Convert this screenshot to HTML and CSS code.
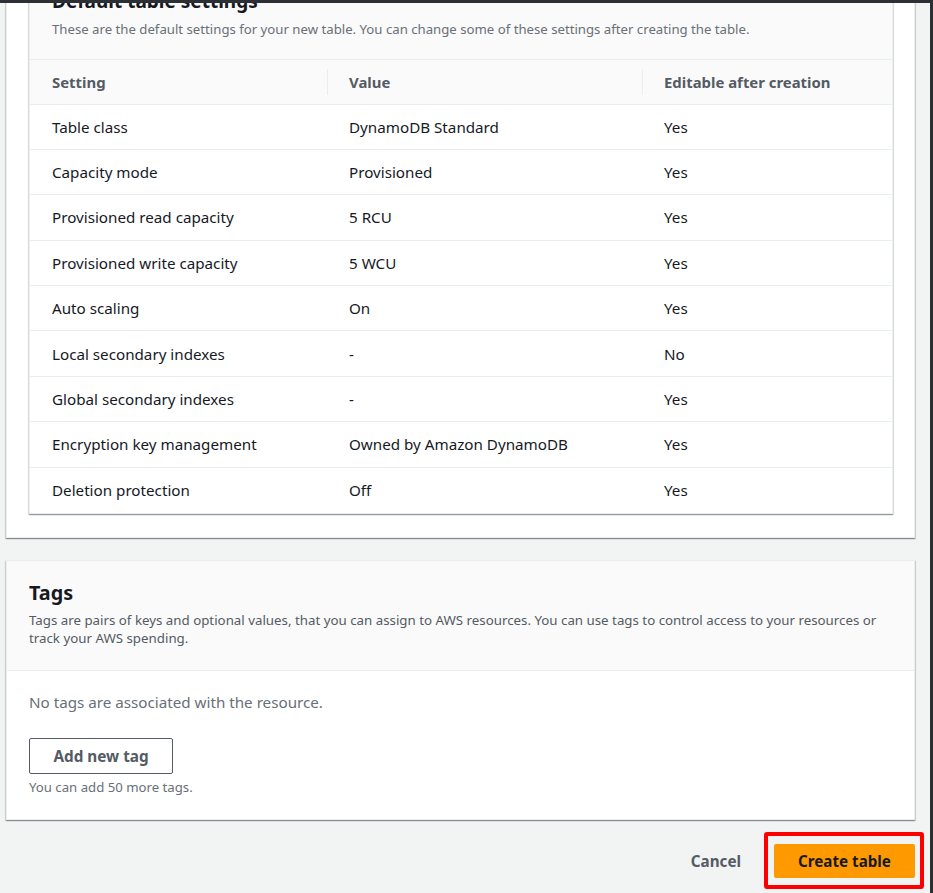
FILE: index.html
```html
<!DOCTYPE html>
<html lang="en">
<head>
<meta charset="utf-8">
<title>Create table</title>
<link rel="stylesheet" href="styles.css">
</head>
<body>
<main class="page">
  <section class="card card-settings">
    <div class="table-box">
      <div class="table-header">
        <h2 class="title">Default table settings</h2>
        <p class="desc">These are the default settings for your new table. You can change some of these settings after creating the table.</p>
      </div>
      <table class="settings">
        <colgroup>
          <col class="c1"><col class="c2"><col class="c3">
        </colgroup>
        <thead>
          <tr>
            <th>Setting</th>
            <th class="div">Value</th>
            <th class="div">Editable after creation</th>
          </tr>
        </thead>
        <tbody>
          <tr><td>Table class</td><td>DynamoDB Standard</td><td>Yes</td></tr>
          <tr><td>Capacity mode</td><td>Provisioned</td><td>Yes</td></tr>
          <tr><td>Provisioned read capacity</td><td>5 RCU</td><td>Yes</td></tr>
          <tr><td>Provisioned write capacity</td><td>5 WCU</td><td>Yes</td></tr>
          <tr><td>Auto scaling</td><td>On</td><td>Yes</td></tr>
          <tr><td>Local secondary indexes</td><td>-</td><td>No</td></tr>
          <tr><td>Global secondary indexes</td><td>-</td><td>Yes</td></tr>
          <tr><td>Encryption key management</td><td>Owned by Amazon DynamoDB</td><td>Yes</td></tr>
          <tr><td>Deletion protection</td><td>Off</td><td>Yes</td></tr>
        </tbody>
      </table>
    </div>
  </section>

  <section class="card card-tags">
    <div class="tags-header">
      <h2 class="tags-title">Tags</h2>
      <p class="tags-desc">Tags are pairs of keys and optional values, that you can assign to AWS resources. You can use tags to control access to your resources or track your AWS spending.</p>
    </div>
    <div class="tags-body">
      <p class="empty">No tags are associated with the resource.</p>
      <button class="btn-normal" type="button">Add new tag</button>
      <p class="hint">You can add 50 more tags.</p>
    </div>
  </section>

  <div class="actions">
    <button class="btn-link" type="button">Cancel</button>
    <span class="highlight">
      <button class="btn-primary" type="button">Create table</button>
    </span>
  </div>
</main>
</body>
</html>
```

FILE: styles.css
```css
* { box-sizing: border-box; }

html, body {
  height: 100%;
}

body {
  margin: 0;
  background: #f2f3f3;
  border-top: 3px solid #2c3035;
  border-right: 3px solid #2c3035;
  font-family: "Noto Sans", "Open Sans", sans-serif;
  color: #16191f;
  overflow: hidden;
}

.page {
  padding: 0 15px 0 6px;
  display: flex;
  flex-direction: column;
}

.card {
  background: #ffffff;
  border: 1px solid #eaeded;
  border-top: none;
  box-shadow: 0 1px 1px 0 rgba(0, 28, 36, 0.3), 1px 1px 1px 0 rgba(0, 28, 36, 0.12), -1px 1px 1px 0 rgba(0, 28, 36, 0.12);
}

.card-settings {
  margin-top: -60px;
  padding: 22px 21px 23px 22px;
}

.table-box {
  border: 1px solid #eaeded;
  box-shadow: 0 1px 1px 0 rgba(0, 28, 36, 0.3), 1px 1px 1px 0 rgba(0, 28, 36, 0.1), -1px 1px 1px 0 rgba(0, 28, 36, 0.1);
  background: #ffffff;
}

.table-header {
  background: #fafafa;
  padding: 24px 22px 21px 22px;
  border-bottom: 1px solid #eaeded;
}

.title {
  margin: 0;
  font-size: 19px;
  line-height: 22px;
  font-weight: 700;
  color: #16191f;
}

.desc {
  margin: 8px 0 0;
  font-size: 13.2px;
  line-height: 18px;
  color: #687078;
  white-space: nowrap;
}

.settings {
  width: 100%;
  border-collapse: collapse;
  table-layout: fixed;
  font-size: 15.2px;
}

.settings col.c1 { width: 297px; }
.settings col.c2 { width: 315px; }

.settings th {
  background: #fafafa;
  height: 44px;
  text-align: left;
  font-weight: 700;
  font-size: 14.9px;
  color: #545b64;
  padding: 0 22px;
  border-bottom: 1px solid #eaeded;
  position: relative;
}

.settings th.div::before {
  content: "";
  position: absolute;
  left: 0;
  top: 9px;
  bottom: 9px;
  width: 1px;
  background: #eaeded;
}

.settings td {
  height: 45.4px;
  padding: 0 22px;
  border-bottom: 1px solid #eaeded;
  color: #16191f;
  white-space: nowrap;
}

.settings tbody tr:last-child td {
  border-bottom: none;
}

.card-tags {
  margin-top: 22px;
  border-top: 1px solid #eaeded;
}

.tags-header {
  background: #fafafa;
  padding: 21px 22px 23px 22px;
  border-bottom: 1px solid #eaeded;
}

.tags-title {
  margin: 0;
  font-size: 19.8px;
  line-height: 22px;
  font-weight: 700;
  color: #16191f;
}

.tags-desc {
  margin: 7px 0 0;
  font-size: 13.3px;
  line-height: 18px;
  color: #545b64;
}

.tags-body {
  padding: 21px 22px 23px 22px;
  display: flex;
  flex-direction: column;
  align-items: flex-start;
}

.empty {
  margin: 0;
  font-size: 15.2px;
  line-height: 20px;
  color: #687078;
}

.btn-normal {
  margin-top: 26px;
  height: 36px;
  width: 144px;
  border: 1px solid #545b64;
  border-radius: 2px;
  background: #ffffff;
  font-family: inherit;
  font-size: 15.3px;
  font-weight: 700;
  color: #545b64;
  padding: 0;
}

.hint {
  margin: 4px 0 0;
  font-size: 13.2px;
  line-height: 18px;
  color: #687078;
}

.actions {
  margin-top: 24px;
  display: flex;
  justify-content: flex-end;
  align-items: center;
  gap: 16px;
}

.btn-link {
  background: none;
  border: none;
  font-family: inherit;
  font-size: 15.2px;
  font-weight: 700;
  color: #545b64;
  padding: 0 17px;
  height: 34px;
}

.highlight {
  position: relative;
  display: inline-flex;
}

.highlight::after {
  content: "";
  position: absolute;
  left: -10px;
  right: -9px;
  top: -12px;
  bottom: -11px;
  border: 4px solid #ff0000;
  border-radius: 3px;
  pointer-events: none;
}

.btn-primary {
  height: 34px;
  width: 141px;
  border: none;
  border-radius: 2px;
  background: #ff9900;
  font-family: inherit;
  font-size: 15.2px;
  font-weight: 700;
  color: #16191f;
  padding: 0;
}
```
